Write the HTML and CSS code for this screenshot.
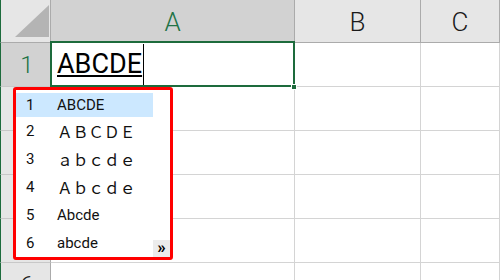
FILE: index.html
```html
<!DOCTYPE html>
<html lang="ja">
<head>
<meta charset="utf-8">
<link rel="stylesheet" href="styles.css">
</head>
<body>
<div class="sheet">
  <div class="grid">
    <div class="corner"><span class="tri"></span></div>
    <div class="colhead sel">A</div>
    <div class="colhead">B</div>
    <div class="colhead">C</div>

    <div class="rowhead sel">1</div>
    <div class="cell active">
      <span class="ime">ABCDE</span><span class="caret"></span>
      <span class="handle"></span>
    </div>
    <div class="cell"></div>
    <div class="cell"></div>

    <div class="rowhead">2</div><div class="cell"></div><div class="cell"></div><div class="cell"></div>
    <div class="rowhead">3</div><div class="cell"></div><div class="cell"></div><div class="cell"></div>
    <div class="rowhead">4</div><div class="cell"></div><div class="cell"></div><div class="cell"></div>
    <div class="rowhead">5</div><div class="cell"></div><div class="cell"></div><div class="cell"></div>
    <div class="rowhead">6</div><div class="cell"></div><div class="cell"></div><div class="cell"></div>
  </div>

  <div class="candidates">
    <div class="cand current"><span class="num">1</span><span class="txt">ABCDE</span></div>
    <div class="cand"><span class="num">2</span><span class="txt wide">ＡＢＣＤＥ</span></div>
    <div class="cand"><span class="num">3</span><span class="txt wide">ａｂｃｄｅ</span></div>
    <div class="cand"><span class="num">4</span><span class="txt wide">Ａｂｃｄｅ</span></div>
    <div class="cand"><span class="num">5</span><span class="txt">Abcde</span></div>
    <div class="cand"><span class="num">6</span><span class="txt">abcde</span></div>
    <span class="more">»</span>
  </div>
</div>
</body>
</html>
```
FILE: styles.css
```css
* { box-sizing: border-box; }
html, body { margin: 0; padding: 0; background: #fff; }
body { width: 500px; height: 280px; overflow: hidden; font-family: Roboto, "Noto Sans CJK JP", sans-serif; }

.sheet { position: relative; width: 500px; height: 280px; overflow: hidden; }

.grid {
  display: grid;
  grid-template-columns: 51px 244px 126px 1fr;
  grid-template-rows: 43px repeat(6, 44px);
}

.corner, .colhead, .rowhead {
  background: #e6e6e6;
  border-right: 1px solid #ababab;
  border-bottom: 1px solid #ababab;
}
.corner { position: relative; border-left: 1px solid #1d6b3c; }
.tri {
  position: absolute; left: 14px; top: 5px; width: 34px; height: 32px;
  background: #b4b4b4;
  clip-path: polygon(100% 0, 100% 100%, 0 100%);
}

.colhead {
  display: flex; align-items: center; justify-content: center;
  font-size: 26px; font-weight: 300; color: #1a1a1a; padding-top: 1px;
}
.colhead.sel { background: #d2d2d2; color: #217346; }

.rowhead {
  display: flex; align-items: center; justify-content: center;
  border-left: 1px solid #1d6b3c;
  border-bottom-color: #c8c8c8;
  font-size: 24px; font-weight: 300; color: #222; padding-left: 3px;
}
.rowhead.sel { background: #d2d2d2; color: #217346; }

.cell {
  border-right: 1px solid #d4d4d4;
  border-bottom: 1px solid #d4d4d4;
}
.cell.active {
  position: relative;
  display: flex; align-items: center;
  padding-left: 6px;
}
.cell.active::after {
  content: ""; position: absolute;
  left: -1px; top: -2px; right: -1px; bottom: -1px;
  border: 2px solid #1d6b3c;
}
.ime {
  font-size: 27px; line-height: 1; color: #000;
  text-decoration: underline; text-decoration-thickness: 2px; text-underline-offset: 2px;
  margin-top: -1px;
}
.caret { width: 1px; height: 42px; background: #000; margin-left: 1px; align-self: flex-end; }
.handle {
  position: absolute; right: -3px; bottom: -4px; width: 6px; height: 6px;
  background: #1d6b3c; border: 1px solid #fff; z-index: 2;
}

.candidates {
  position: absolute; left: 13px; top: 87px; width: 160px; height: 173px;
  background: #fff;
  border: 3px solid #ff0000; border-radius: 3px;
  padding: 3px 0 0 0;
  z-index: 3;
}
.cand {
  display: flex; align-items: center;
  height: 28px; width: 137px;
  font-size: 15px; color: #111;
}
.cand.current { background: #cce8ff; height: 24px; }
.num { width: 41px; padding-left: 10px; }
.txt { font-family: Roboto, sans-serif; }
.txt.wide { font-family: "Noto Sans CJK JP", sans-serif; font-size: 15.7px; }
.more {
  position: absolute; right: 0; bottom: 0; width: 17px; height: 17px;
  background: #ececec; display: flex; align-items: center; justify-content: center;
  font-size: 17px; font-weight: bold; color: #000; line-height: 1; padding-bottom: 2px;
}
```
